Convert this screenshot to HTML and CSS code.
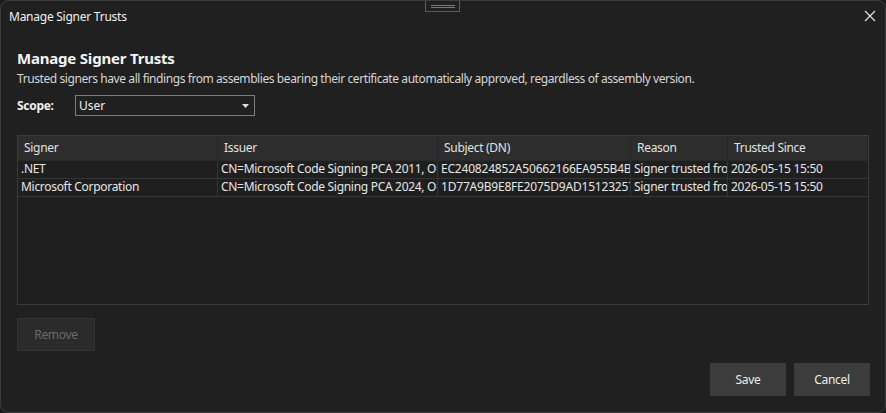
FILE: index.html
```html
<!DOCTYPE html>
<html>
<head>
<meta charset="utf-8">
<link rel="stylesheet" href="styles.css">
</head>
<body>
<div class="window">
  <div class="drag-handle"><span></span><span></span></div>
  <div class="titlebar">
    <span class="title">Manage Signer Trusts</span>
    <svg class="close" width="12" height="12" viewBox="0 0 12 12"><path d="M1 1 L11 11 M11 1 L1 11" stroke="#e8e8e8" stroke-width="1.1" fill="none"/></svg>
  </div>
  <div class="content">
    <h1 class="heading">Manage Signer Trusts</h1>
    <p class="desc">Trusted signers have all findings from assemblies bearing their certificate automatically approved, regardless of assembly version.</p>
    <div class="scope-row">
      <span class="scope-label">Scope:</span>
      <div class="combo"><span>User</span><svg width="7" height="4" viewBox="0 0 7 4"><path d="M0 0 H7 L3.5 4 Z" fill="#e0e0e0"/></svg></div>
    </div>
    <div class="grid">
      <div class="row head">
        <div class="c c1">Signer</div>
        <div class="c c2">Issuer</div>
        <div class="c c3">Subject (DN)</div>
        <div class="c c4">Reason</div>
        <div class="c c5">Trusted Since</div>
      </div>
      <div class="row">
        <div class="c c1">.NET</div>
        <div class="c c2">CN=Microsoft Code Signing PCA 2011, O=Microsoft</div>
        <div class="c c3">EC240824852A50662166EA955B4BAD9E</div>
        <div class="c c4">Signer trusted from</div>
        <div class="c c5">2026-05-15 15:50</div>
      </div>
      <div class="row">
        <div class="c c1">Microsoft Corporation</div>
        <div class="c c2">CN=Microsoft Code Signing PCA 2024, O=Microsoft</div>
        <div class="c c3">1D77A9B9E8FE2075D9AD15123257F0A1</div>
        <div class="c c4">Signer trusted from</div>
        <div class="c c5">2026-05-15 15:50</div>
      </div>
    </div>
    <div class="remove-row">
      <button class="btn disabled">Remove</button>
    </div>
    <div class="footer">
      <button class="btn">Save</button>
      <button class="btn">Cancel</button>
    </div>
  </div>
</div>
</body>
</html>
```

FILE: styles.css
```css
html, body {
  margin: 0;
  padding: 0;
  background: #191919;
}
body {
  font-family: "Noto Sans", "Open Sans", sans-serif;
  font-size: 12px;
  color: #e6e6e6;
}
.window {
  position: relative;
  width: 886px;
  height: 413px;
  box-sizing: border-box;
  border: 1px solid #3d3d3d;
  border-radius: 8px;
  background: #202020;
  display: flex;
  flex-direction: column;
  overflow: hidden;
}
.drag-handle {
  position: absolute;
  left: 424px;
  top: -1px;
  width: 35px;
  height: 12px;
  border: 1px solid #5c5c5c;
  box-sizing: border-box;
  display: flex;
  flex-direction: column;
  align-items: center;
  justify-content: center;
  gap: 1px;
}
.drag-handle span {
  display: block;
  width: 24px;
  height: 1px;
  background: #7a7a7a;
}
.titlebar {
  height: 31px;
  display: flex;
  align-items: center;
  justify-content: space-between;
  padding: 0 9px 0 8px;
  flex-shrink: 0;
}
.title {
  font-size: 12px;
  color: #f0f0f0;
  letter-spacing: -0.25px;
}
.close {
  display: block;
  margin-top: -1px;
}
.content {
  flex: 1;
  display: flex;
  flex-direction: column;
  padding: 0 15px 0 16px;
}
.heading {
  margin: 16px 0 0 0;
  font-size: 15px;
  line-height: 20px;
  font-weight: 700;
  color: #f4f4f4;
  letter-spacing: -0.2px;
}
.desc {
  margin: 3px 0 0 0;
  line-height: 16px;
  color: #d6d6d6;
  letter-spacing: -0.42px;
}
.scope-row {
  display: flex;
  align-items: center;
  margin-top: 8px;
}
.scope-label {
  width: 58px;
  font-weight: 700;
  color: #f0f0f0;
  letter-spacing: -0.3px;
}
.combo {
  width: 180px;
  height: 21px;
  box-sizing: border-box;
  border: 1px solid #7c7c7c;
  display: flex;
  align-items: center;
  justify-content: space-between;
  padding: 0 5px 0 3px;
  color: #f0f0f0;
}
.combo span {
  line-height: 18px;
}
.grid {
  margin-top: 19px;
  width: 852px;
  height: 170px;
  box-sizing: border-box;
  border: 1px solid #3a3a3a;
  background: #1f1f1f;
  display: flex;
  flex-direction: column;
}
.row {
  display: flex;
  height: 18px;
  border-bottom: 1px solid #353535;
  box-sizing: border-box;
  width: 850px;
}
.row.head {
  height: 25px;
  background: #2d2d2d;
  border-bottom: 1px solid #2a2a2a;
}
.c {
  box-sizing: border-box;
  overflow: hidden;
  white-space: nowrap;
  text-overflow: clip;
  border-right: 1px solid #353535;
  padding: 0 3px;
  line-height: 16px;
  color: #e6e6e6;
  letter-spacing: -0.3px;
}
.head .c {
  line-height: 24px;
  padding-left: 6px;
  border-right: 1px solid #262626;
  color: #e2e2e2;
}
.c1 { width: 200px; }
.c2 { width: 220px; }
.c3 { width: 193px; letter-spacing: -0.2px; }
.head .c3 { letter-spacing: -0.3px; }
.c4 { width: 97px; }
.c5 { width: 140px; border-right: none; }
.remove-row {
  margin-top: 13px;
  display: flex;
}
.btn {
  width: 76px;
  height: 33px;
  box-sizing: border-box;
  border: 1px solid #3c3c3c;
  background: #3c3c3c;
  color: #ececec;
  font-family: "Noto Sans", "Open Sans", sans-serif;
  font-size: 12px;
  letter-spacing: -0.3px;
  padding: 0;
}
.btn.disabled {
  width: 78px;
  background: #2b2b2b;
  border-color: #353535;
  color: #6a6a6a;
}
.footer {
  margin-top: 12px;
  display: flex;
  justify-content: flex-end;
  gap: 8px;
}
```
